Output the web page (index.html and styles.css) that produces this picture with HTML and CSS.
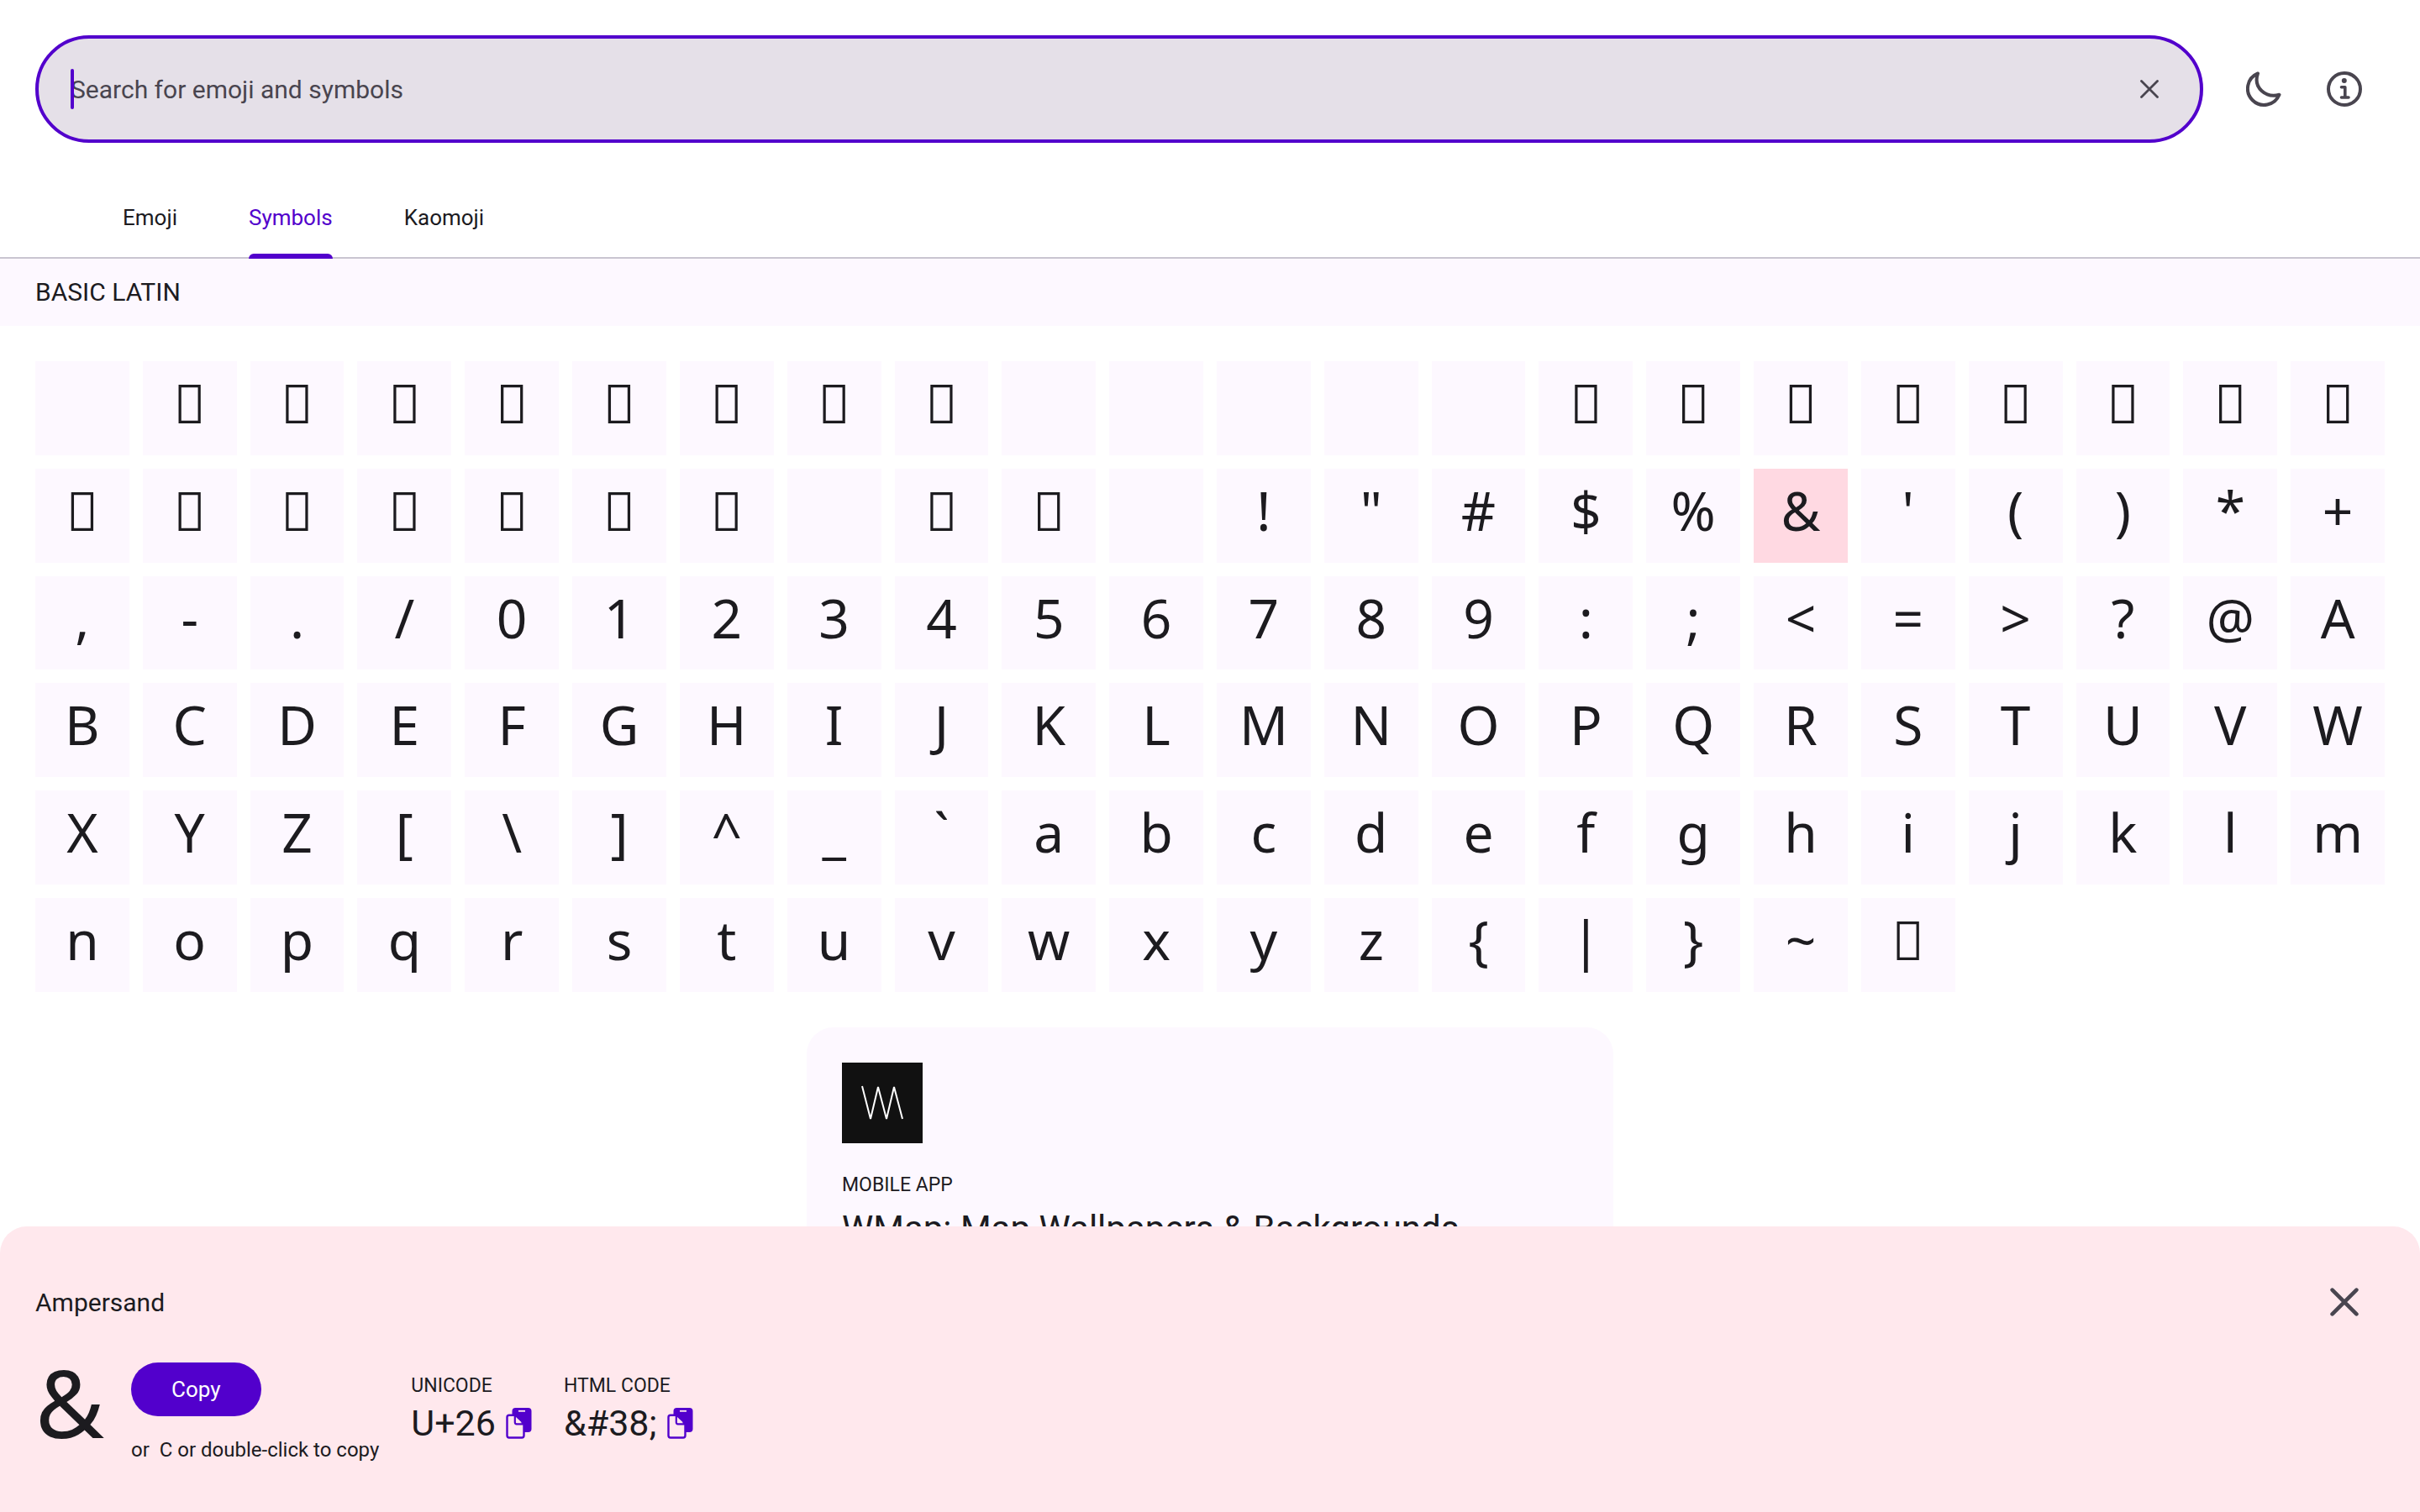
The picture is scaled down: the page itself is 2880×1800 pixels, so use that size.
FILE: index.html
```html
<!DOCTYPE html>
<html lang="en">
<head>
<meta charset="utf-8">
<meta name="viewport" content="width=device-width, initial-scale=1">
<title>Emoji and symbols</title>
<link rel="stylesheet" href="styles.css">
</head>
<body>
<header class="header">
  <div class="toolbar">
    <form class="search" role="search">
      <input class="search-input" type="text" placeholder="Search for emoji and symbols" aria-label="Search for emoji and symbols">
      <span class="caret"></span>
      <button class="icon-button" type="reset" aria-label="Clear">
        <svg width="22" height="22" viewBox="0 0 22 22" fill="none" stroke="currentColor" stroke-width="2.8" stroke-linecap="round"><path d="M1.5 1.5l19 19M20.5 1.5l-19 19"/></svg>
      </button>
    </form>
    <div class="actions">
      <button class="icon-button" type="button" aria-label="Dark theme">
        <svg width="42" height="42" viewBox="0 0 42 42" fill="none" stroke="currentColor" stroke-width="4" stroke-linejoin="round"><path d="M14 2.4A19.5 19.5 0 1 0 39.5 27.8C24 32 8 20 14 2.4z"/></svg>
      </button>
      <button class="icon-button" type="button" aria-label="About">
        <svg width="42" height="42" viewBox="0 0 42 42" fill="none" stroke="currentColor" stroke-width="4" stroke-linecap="round" stroke-linejoin="round"><circle cx="21" cy="21" r="19"/><path stroke-width="3.6" d="M17.5 18.8h4.3V31M17.5 31h8.5"/><circle cx="20.8" cy="11" r="3" fill="currentColor" stroke="none"/></svg>
      </button>
    </div>
  </div>
  <nav class="tabs">
    <a class="tab" href="#emoji">Emoji</a>
    <a class="tab tab-active" href="#symbols" aria-current="page">Symbols</a>
    <a class="tab" href="#kaomoji">Kaomoji</a>
  </nav>
</header>
<main>
  <h2 class="section-title">BASIC LATIN</h2>
  <div class="grid" id="grid"></div>
  <article class="card">
    <svg class="card-logo" width="96" height="96" viewBox="0 0 96 96"><rect width="96" height="96" fill="#111"/><path d="M24 28l10 39 9-38 10 38 9-38 10 38" fill="none" stroke="#fff" stroke-width="2"/></svg>
    <p class="overline">MOBILE APP</p>
    <h3 class="card-title">WMap: Map Wallpapers &amp; Backgrounds</h3>
  </article>
</main>
<aside class="sheet" aria-label="Selected symbol">
  <div class="sheet-head">
    <h2 class="sheet-title">Ampersand</h2>
    <button class="icon-button" type="button" aria-label="Close">
      <svg width="34" height="34" viewBox="0 0 34 34" fill="none" stroke="currentColor" stroke-width="4.6" stroke-linecap="round"><path d="M2.6 2.6l28.8 28.8M31.4 2.6L2.6 31.4"/></svg>
    </button>
  </div>
  <div class="sheet-body">
    <div class="preview">&amp;</div>
    <div class="copy">
      <button class="copy-button" type="button">Copy</button>
      <p class="hint">or &nbsp;C or double-click to copy</p>
    </div>
    <div class="code">
      <p class="overline">UNICODE</p>
      <div class="code-value">U+26
        <button class="plain-button" type="button" aria-label="Copy Unicode">
          <svg width="31" height="37" viewBox="0 0 31 37"><use href="#clip"/></svg>
        </button>
      </div>
    </div>
    <div class="code">
      <p class="overline">HTML CODE</p>
      <div class="code-value">&amp;#38;
        <button class="plain-button" type="button" aria-label="Copy HTML code">
          <svg width="31" height="37" viewBox="0 0 31 37"><use href="#clip"/></svg>
        </button>
      </div>
    </div>
  </div>
</aside>
<svg class="defs" width="0" height="0" aria-hidden="true">
  <symbol id="clip" viewBox="0 0 31 37">
    <rect x="7.5" y="0" width="23" height="29" rx="4" fill="#5200cc"/>
    <path d="M15 3.8h8" stroke="#ffe8ed" stroke-width="1.8"/>
    <path d="M10.8 8.7H4A2.5 2.5 0 0 0 1.5 11.2V33A2.5 2.5 0 0 0 4 35.5H19A2.5 2.5 0 0 0 21.5 33V19.3z" fill="#ffe8ed" stroke="#5200cc" stroke-width="2.4" stroke-linejoin="round"/>
    <path d="M12 11v6.500h7z" fill="#ffe8ed"/>
    <path d="M10.8 9v8.3a2 2 0 0 0 2 2h8.7" fill="none" stroke="#5200cc" stroke-width="2.2"/>
  </symbol>
</svg>
<script src="grid.js"></script>
</body>
</html>
```
FILE: styles.css
```css
* { box-sizing: border-box; margin: 0; }
body { background: #fff; color: #1c1b1f; font-family: Roboto, sans-serif; }
button { border: 0; padding: 0; background: none; color: inherit; font: inherit; cursor: pointer; }
svg { display: block; }
h2, h3 { font-weight: 400; }

.header { padding-top: 42px; border-bottom: 2px solid #c9c5d0; }
.toolbar { display: flex; align-items: center; gap: 24px; padding: 0 42px; }
.search { position: relative; flex: 1; display: flex; align-items: center; height: 128px; padding: 0 12px 0 38px; border: 4px solid #5200cc; border-radius: 64px; background: #e5e0e8; }
.search-input { flex: 1; min-width: 0; height: 64px; padding: 0; border: 0; outline: 0; background: none; color: inherit; font-family: inherit; font-size: 30px; }
.search-input::placeholder { color: #49454f; opacity: 1; }
.caret { position: absolute; left: 38px; top: 36px; width: 4px; height: 48px; border-radius: 2px; background: #5200cc; }
.icon-button { display: grid; place-items: center; width: 96px; height: 96px; color: #49454f; }
.actions { display: flex; }

.tabs { display: flex; gap: 85px; height: 94px; margin-top: 42px; padding: 0 146px; }
.tab { position: relative; display: flex; align-items: center; color: #1c1b1f; font-size: 26px; text-decoration: none; }
.tab-active { color: #5200cc; }
.tab-active::after { content: ""; position: absolute; left: 0; right: 0; bottom: -2px; height: 6px; border-radius: 6px 6px 0 0; background: #5200cc; }

.section-title { padding: 0 42px; background: #fdf8ff; font-size: 30px; line-height: 80px; }
.grid { display: grid; grid-template-columns: repeat(auto-fill, minmax(108px, 1fr)); gap: 16px; padding: 42px; }
.cell { display: grid; place-items: center; aspect-ratio: 1; padding-bottom: 12px; background: #fdf8ff; font-family: "Noto Sans", sans-serif; font-size: 64px; line-height: 80px; }
.cell-selected { background: #ffd9e2; }

.card { max-width: 960px; margin: 0 auto; padding: 42px; border-radius: 32px; background: #fdf8ff; }
.card-logo { margin-bottom: 34px; }
.overline { font-size: 23px; line-height: 32px; }
.card-title { margin-top: 8px; font-size: 42px; line-height: 56px; }

.sheet { position: fixed; left: 0; right: 0; bottom: 0; padding: 42px 42px 58px; border-radius: 32px 32px 0 0; background: #ffe8ed; }
.sheet-head { display: flex; align-items: center; justify-content: space-between; margin-bottom: 24px; }
.sheet-title { font-size: 30px; }
.sheet-body { display: flex; align-items: flex-start; gap: 32px; }
.preview { font-family: "Noto Sans", sans-serif; font-size: 112px; line-height: 94px; }
.copy-button { display: block; height: 64px; padding: 0 48px; border-radius: 32px; background: #5200cc; color: #fff; font-size: 26px; }
.hint { margin-top: 24px; font-size: 24px; line-height: 32px; }
.code { padding: 12px 0 0 6px; }
.code-value { display: flex; align-items: center; gap: 12px; margin-top: 4px; font-size: 43px; line-height: 48px; }
.defs { position: absolute; }
```
FILE: grid.js
```js
// Fills the Basic Latin block, U+0000 to U+007F.
const grid = document.getElementById("grid");
const blank = [0, 9, 10, 11, 12, 13, 29, 32];
const selected = 38;

for (let code = 0; code < 128; code++) {
  const cell = document.createElement("button");
  cell.type = "button";
  cell.className = code === selected ? "cell cell-selected" : "cell";
  cell.setAttribute("aria-label", "U+" + code.toString(16).toUpperCase());
  if (!blank.includes(code)) {
    // Control codes have no glyph of their own and show as an empty box.
    const control = code < 32 || code === 127;
    cell.textContent = control ? "\u{10FFFD}" : String.fromCharCode(code);
  }
  grid.append(cell);
}
```
